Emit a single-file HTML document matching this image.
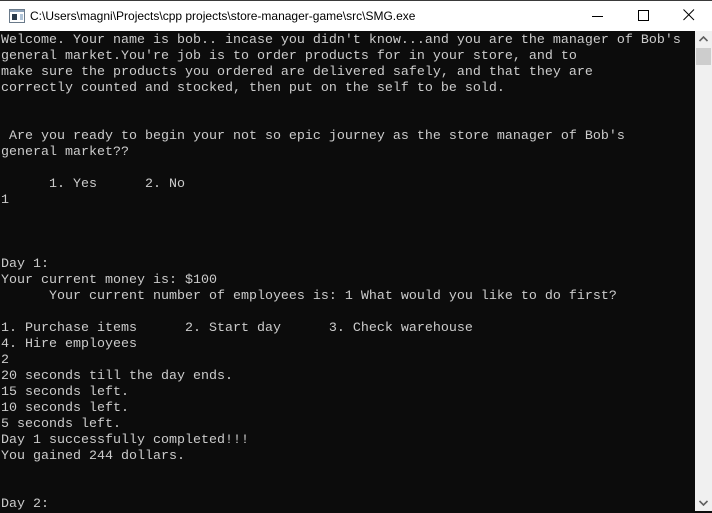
<!DOCTYPE html>
<html><head><style>
*{margin:0;padding:0}
body{width:712px;height:511px;overflow:hidden;background:#0c0c0c;position:relative;font-family:"Liberation Sans",sans-serif}
#top{position:absolute;left:0;top:0;width:712px;height:1px;background:#3a3a3a}
#tb{position:absolute;left:0;top:1px;width:712px;height:30px;background:#fff}
#title{position:absolute;left:30px;top:8px;font-size:12px;color:#000}
#con{position:absolute;left:1px;top:33px;width:694px;height:478px;background:#0c0c0c;color:#cccccc;font-family:"Liberation Mono",monospace;font-size:13.33px;line-height:16px;white-space:pre}
#sb{position:absolute;left:695px;top:31px;width:17px;height:480px;background:#f0f0f0}
#thumb{position:absolute;left:1px;top:17px;width:15px;height:17px;background:#cdcdcd}
</style></head><body>
<div id="top"></div>
<div id="tb">
<svg style="position:absolute;left:9px;top:8px" width="16" height="14"><rect x="0.5" y="0.5" width="15" height="13" fill="#fff" stroke="#6a7a8a"/><rect x="1" y="1" width="14" height="2" fill="#8aa0b8"/><rect x="3" y="5" width="5" height="6" fill="#2a3a4a"/><rect x="11" y="5" width="3" height="6" fill="#b0c4d8"/></svg>
<div id="title">C:\Users\magni\Projects\cpp projects\store-manager-game\src\SMG.exe</div>
<svg style="position:absolute;left:592px;top:9px" width="12" height="12"><line x1="0" y1="6.5" x2="11" y2="6.5" stroke="#000"/></svg>
<svg style="position:absolute;left:638px;top:9px" width="12" height="12"><rect x="0.5" y="0.5" width="10" height="10" fill="none" stroke="#000"/></svg>
<svg style="position:absolute;left:683px;top:8px" width="12" height="12"><path d="M0.5 0.5L11 11M11 0.5L0.5 11" stroke="#000"/></svg>
</div>
<div id="con">Welcome. Your name is bob.. incase you didn't know...and you are the manager of Bob's
general market.You're job is to order products for in your store, and to
make sure the products you ordered are delivered safely, and that they are
correctly counted and stocked, then put on the self to be sold.


 Are you ready to begin your not so epic journey as the store manager of Bob's
general market??

      1. Yes      2. No
1



Day 1:
Your current money is: $100
      Your current number of employees is: 1 What would you like to do first?

1. Purchase items      2. Start day      3. Check warehouse
4. Hire employees
2
20 seconds till the day ends.
15 seconds left.
10 seconds left.
5 seconds left.
Day 1 successfully completed!!!
You gained 244 dollars.


Day 2:</div>
<div id="sb"><div id="thumb"></div>
<svg style="position:absolute;left:4px;top:5px" width="9" height="6"><path d="M0.5 5L4.5 1L8.5 5" stroke="#606060" stroke-width="1.6" fill="none"/></svg>
<svg style="position:absolute;left:4px;top:469px" width="9" height="6"><path d="M0.5 1L4.5 5L8.5 1" stroke="#606060" stroke-width="1.6" fill="none"/></svg>
</div>
</body></html>
